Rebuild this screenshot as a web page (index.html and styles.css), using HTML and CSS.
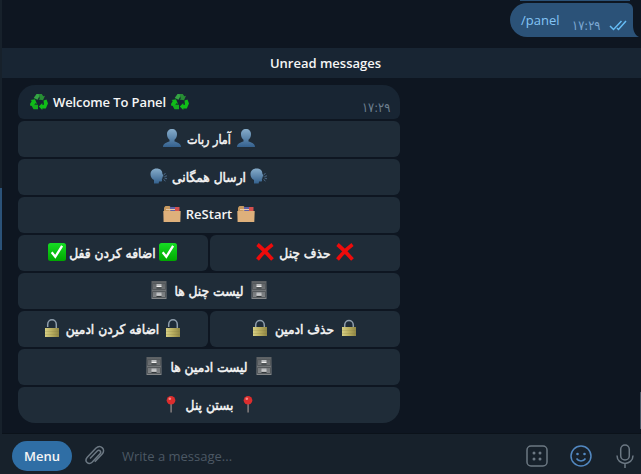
FILE: index.html
```html
<!DOCTYPE html>
<html lang="en">
<head>
<meta charset="utf-8">
<title>Chat</title>
<link rel="stylesheet" href="styles.css">
</head>
<body>
<svg class="defs" width="0" height="0" aria-hidden="true">
  <defs>
    <linearGradient id="blue" x1="0" y1="0" x2="0" y2="1"><stop offset="0" stop-color="#86acca"/><stop offset="1" stop-color="#34618e"/></linearGradient>
    <linearGradient id="green" x1="0" y1="0" x2="0" y2="1"><stop offset="0" stop-color="#16dc24"/><stop offset="1" stop-color="#00a800"/></linearGradient>
    <linearGradient id="gold" x1="0" y1="0" x2="1" y2="0"><stop offset="0" stop-color="#d6cf84"/><stop offset=".5" stop-color="#b8ad5e"/><stop offset="1" stop-color="#8f8645"/></linearGradient>
    <linearGradient id="steel" x1="0" y1="0" x2="0" y2="1"><stop offset="0" stop-color="#5c6063"/><stop offset="1" stop-color="#85888a"/></linearGradient>
  </defs>
  <symbol id="person" viewBox="0 0 18 18"><path fill="url(#blue)" d="M9 0c3 0 5 2 5 5.200 0 2.300-1 4.500-2.500 5.600v1.700c2.800 1 6.500 1.800 6.500 5.500H0c0-3.700 3.700-4.500 6.500-5.500v-1.700C5 9.700 4 7.500 4 5.200 4 2 6 0 9 0z"/></symbol>
  <symbol id="speak" viewBox="0 0 18 18"><path fill="url(#blue)" d="M6.500 1.500c3.800 0 6 2.300 5.800 5l1.300 2.700-1.200.6.200 1.400-.8.500.3 2.200c-.6.900-2 .6-3.100.6l-.3 2H4v-3.400C1.600 11.500.5 9.500.5 7.200c0-3.400 2.600-5.700 6-5.700z"/><path stroke="#58799a" stroke-width=".8" fill="none" d="M13.800 8l1.700-2M14.500 9.500l2.500-.7M14.500 11l2.500.8M13.800 12.300l1.500 2"/></symbol>
  <symbol id="folder" viewBox="0 0 18 18"><path fill="#c7995f" d="M1 6V2.500L2.500 1h4L8 2.500V6z"/><path fill="#5e61a8" d="M7 2h5v4H7z"/><path fill="#d5504e" d="M12 2h4.500v4H12z"/><path fill="#e9c9a9" d="M3 4h9v1H3z"/><path fill="#deb07b" d="M.3 6h5l1.300-1 1.300 1h9.800l-.4 11H.6z"/></symbol>
  <symbol id="check" viewBox="0 0 18 18"><rect width="18" height="18" rx="2.500" fill="url(#green)"/><path d="M3.700 9.300l3.600 4.500 6.800-11" fill="none" stroke="#fff" stroke-width="2.300"/></symbol>
  <symbol id="cross" viewBox="0 0 18 18"><path d="M1.500 1.500Q7 6 16.500 16.500M16.500 1.500Q9 7 1.500 16.500" fill="none" stroke="#ee0b0b" stroke-width="3.700"/></symbol>
  <symbol id="cabinet" viewBox="0 0 18 18"><path fill="url(#steel)" d="M1.500 0h15v18h-15z"/><path fill="none" stroke="#54595c" d="M2.500 2.500h13v6h-13zM2.500 10.500h13v6h-13z"/><path fill="#b9bcbe" d="M6.500 3h5v2h-5zM6.500 11.500h5v2h-5z"/><path fill="#f2f2f2" d="M6.500 5h5v1h-5zM6.500 13.500h5v1h-5z"/><path fill="#33383b" d="M6.500 6.500h5v1h-5zM6.500 15h5v1h-5z"/></symbol>
  <symbol id="lock" viewBox="0 0 18 18"><path d="M4.700 9V6.200C4.700 0 13.300 0 13.300 6.200V9" fill="none" stroke="#8f9eac" stroke-width="1.500"/><path fill="url(#gold)" d="M2 8h14v9H2z"/><path stroke="#7c7540" stroke-opacity=".2" d="M2 11.500h14M2 14.500h14"/></symbol>
  <symbol id="unlock" viewBox="0 0 18 18"><path d="M4.700 8V5.500C4.700-.8 13.300-.8 13.300 5.500V9" fill="none" stroke="#8f9eac" stroke-width="1.500"/><path fill="url(#gold)" d="M2 9h14v9H2z"/><path stroke="#7c7540" stroke-opacity=".2" d="M2 12.500h14M2 15.500h14"/></symbol>
  <symbol id="pin" viewBox="0 0 18 18"><path fill="#8d8584" d="M8.400 8h1.400v9.500H8.400z"/><circle cx="9" cy="5.200" r="4.300" fill="#dc2d2d"/><circle cx="7.800" cy="3.700" r="1.300" fill="#f58a85"/></symbol>
  <symbol id="recycle" viewBox="0 0 18 18"><g fill="#10bd18"><path fill="#35a544" d="M3.700 5l2.800-4h4.200L7.500 6.700z"/><path fill="#278d34" d="M8.500 1h3.300l1.500 2.300L15 2.700l-2 4.500-4.500-.8 1.300-.8z"/><path d="M13.500 7.500l3-1L18 10.500l-2.200 5h-3.500V17L8.800 13.500 12.300 10v1.800h1.700z"/><path fill="#14ad1e" d="M8 11.700v4.500H3.500l-2.200-4L3 11.500z"/><path d="M5 6.200l2 4.700-1.700-.7L4 12.300.5 13 0 11l1.800-3L.5 7z"/></g></symbol>
</svg>
<main class="chat">
  <section class="history">
    <div class="previous"></div>
    <div class="outgoing">
      <span class="command">/panel</span><time class="sent">۱۷:۲۹</time>
      <svg class="ticks" viewBox="0 0 18 11"><path d="M1 6l3.500 3.500L12.500 1M8 8l1.500 1.500L17 1"/></svg>
      <svg class="tail" viewBox="0 0 7 12"><path d="M0 0c0 6 2 10 6 12H0z"/></svg>
    </div>
    <div class="unread">Unread messages</div>
    <div class="panel">
      <div class="welcome"><svg class="emoji"><use href="#recycle"/></svg><span class="title">Welcome To Panel</span><svg class="emoji"><use href="#recycle"/></svg><time>۱۷:۲۹</time></div>
      <div class="key"><svg class="emoji"><use href="#person"/></svg><span class="label narrow" style="width:46px">آمار ربات</span><svg class="emoji"><use href="#person"/></svg></div>
      <div class="key"><svg class="emoji"><use href="#speak"/></svg><span class="label" style="width:72px">ارسال همگانی</span><svg class="emoji"><use href="#speak"/></svg></div>
      <div class="key"><svg class="emoji"><use href="#folder"/></svg><span class="label latin" style="width:46px">ReStart</span><svg class="emoji"><use href="#folder"/></svg></div>
      <div class="pair">
        <div class="key"><svg class="emoji"><use href="#check"/></svg><span class="label" style="width:83px">اضافه کردن قفل</span><svg class="emoji"><use href="#check"/></svg></div>
        <div class="key"><svg class="emoji"><use href="#cross"/></svg><span class="label" style="width:52px">حذف چنل</span><svg class="emoji"><use href="#cross"/></svg></div>
      </div>
      <div class="key"><svg class="emoji"><use href="#cabinet"/></svg><span class="label" style="width:72px">لیست چنل ها</span><svg class="emoji"><use href="#cabinet"/></svg></div>
      <div class="pair">
        <div class="key"><svg class="emoji"><use href="#unlock"/></svg><span class="label" style="width:93px">اضافه کردن ادمین</span><svg class="emoji"><use href="#unlock"/></svg></div>
        <div class="key"><svg class="emoji"><use href="#lock"/></svg><span class="label" style="width:61px">حذف ادمین</span><svg class="emoji"><use href="#lock"/></svg></div>
      </div>
      <div class="key"><svg class="emoji"><use href="#cabinet"/></svg><span class="label" style="width:82px">لیست ادمین ها</span><svg class="emoji"><use href="#cabinet"/></svg></div>
      <div class="key last"><svg class="emoji"><use href="#pin"/></svg><span class="label" style="width:49px">بستن پنل</span><svg class="emoji"><use href="#pin"/></svg></div>
    </div>
  </section>
  <footer class="composer">
    <div class="menu">Menu</div>
    <svg class="clip" viewBox="0 0 20 22"><path d="M5 13.500l7-7.200c2.300-2.300 5 .3 2.800 2.700l-7.500 8c-3.700 3.700-8.500-.8-5-4.700l8.500-9C15.500-1 21.500 4.500 17 9.200l-7.200 7.600"/></svg>
    <span class="placeholder">Write a message...</span>
    <svg class="tool commands" viewBox="0 0 22 22"><rect x="1" y="1" width="20" height="20" rx="4"/><g class="dots"><circle cx="8" cy="8" r="1.500"/><circle cx="14" cy="8" r="1.500"/><circle cx="8" cy="14" r="1.500"/><circle cx="14" cy="14" r="1.500"/></g></svg>
    <svg class="tool smile" viewBox="0 0 22 22"><circle cx="11" cy="11" r="10"/><path d="M6.500 13.500c2 3.200 7 3.200 9 0"/><g class="dots"><circle cx="7.500" cy="9" r="1.300"/><circle cx="14.500" cy="9" r="1.300"/></g></svg>
    <svg class="mic" viewBox="0 0 18 24"><rect x="4.700" y="1" width="8.600" height="15" rx="4.300"/><path d="M1 11.500c0 10.500 16 10.500 16 0M9 19.500V24"/></svg>
  </footer>
</main>
<i class="edge"></i>
<i class="scroll"></i>
</body>
</html>
```
FILE: styles.css
```css
* { box-sizing: border-box; }
body { margin: 0; width: 641px; height: 474px; overflow: hidden; position: relative; background: #0e1621; color: #f5f5f5; font: 13px/18px "Open Sans", "DejaVu Sans", sans-serif; }
.defs { position: absolute; }
svg { display: block; flex: none; }
.chat { height: 474px; display: flex; flex-direction: column; border-left: 2px solid #17212b; }
.history { height: 433px; display: flex; flex-direction: column; }
.previous { width: 110px; height: 1px; margin-left: 518px; background: #2b5278; }
.outgoing { position: relative; width: 123px; height: 34px; margin: 2px 0 0 508px; padding-left: 11px; background: #2b5278; border-radius: 17px 6px 0 17px; display: flex; align-items: center; }
.command { width: 51px; color: #84c5f6; }
time { direction: ltr; white-space: nowrap; font: 13px/16px "DejaVu Sans", sans-serif; color: #6d7f8f; transform: scaleX(.88); transform-origin: right; }
time.sent { width: 28px; margin-top: 12px; color: #7da8d3; transform-origin: left; }
.ticks { width: 18px; height: 11px; margin: 10px 0 0 9px; fill: none; stroke: #66bdf6; stroke-width: 1.500; }
.tail { position: absolute; right: -7px; bottom: 0; width: 7px; height: 12px; fill: #2b5278; }
.unread { height: 30px; margin-top: 11px; padding-left: 8px; background: #182533; text-align: center; line-height: 30px; font-weight: 600; }
.panel { width: 382px; margin: 7px 0 0 16px; display: flex; flex-direction: column; gap: 2px; }
.welcome { height: 34px; padding: 0 10px 0 12px; background: #182533; border-radius: 17px 17px 6px 6px; display: flex; align-items: center; }
.welcome time { margin: 12px 0 0 auto; }
.title { width: 113px; margin: 0 5px; white-space: nowrap; font-weight: 600; letter-spacing: -.1px; }
.emoji { width: 18px; height: 18px; }
.key { flex: 1; flex-basis: 36px; height: 36px; min-width: 0; padding-bottom: 2px; background: #1f2c38; border-radius: 6px; display: flex; justify-content: center; align-items: center; gap: 5px; }
.key.last { border-radius: 6px 6px 17px 17px; }
.pair { display: grid; grid-template-columns: 190px 190px; gap: 2px; }
.pair .key { padding-right: 1px; }
.label { direction: rtl; display: flex; justify-content: center; white-space: nowrap; padding-top: 2px; font: 13.500px/18px "DejaVu Sans", sans-serif; -webkit-text-stroke: .5px currentColor; transform: scaleX(.91); }
.label.narrow { transform: scaleX(.83); }
.label.latin { direction: ltr; padding: 0; font: 600 13px/18px "Open Sans", sans-serif; -webkit-text-stroke: 0; transform: none; }
.composer { height: 41px; padding: 5px 7px 1px 10px; border-top: 1px solid #0b121a; background: #17212b; display: flex; align-items: center; }
.menu { width: 60px; height: 30px; border-radius: 15px; background: #2f6ea5; text-align: center; line-height: 30px; font-weight: 600; }
.clip { width: 20px; height: 22px; margin-left: 13px; fill: none; stroke: #6c7883; stroke-width: 1.500; }
.placeholder { margin: 0 auto 1px 17px; color: #4c5864; }
.tool { width: 22px; height: 22px; margin-right: 22px; fill: none; stroke: #6c7883; stroke-width: 1.500; }
.dots { fill: #6c7883; stroke: none; }
.smile { margin-right: 24px; stroke: #5288c1; }
.smile .dots { fill: #5288c1; }
.mic { width: 18px; height: 24px; fill: none; stroke: #6c7883; stroke-width: 1.500; }
.edge { position: absolute; left: 0; top: 188px; width: 2px; height: 62px; background: #2b5278; }
.scroll { position: absolute; right: 0; top: 392px; width: 1px; height: 37px; background: #465462; }
```
